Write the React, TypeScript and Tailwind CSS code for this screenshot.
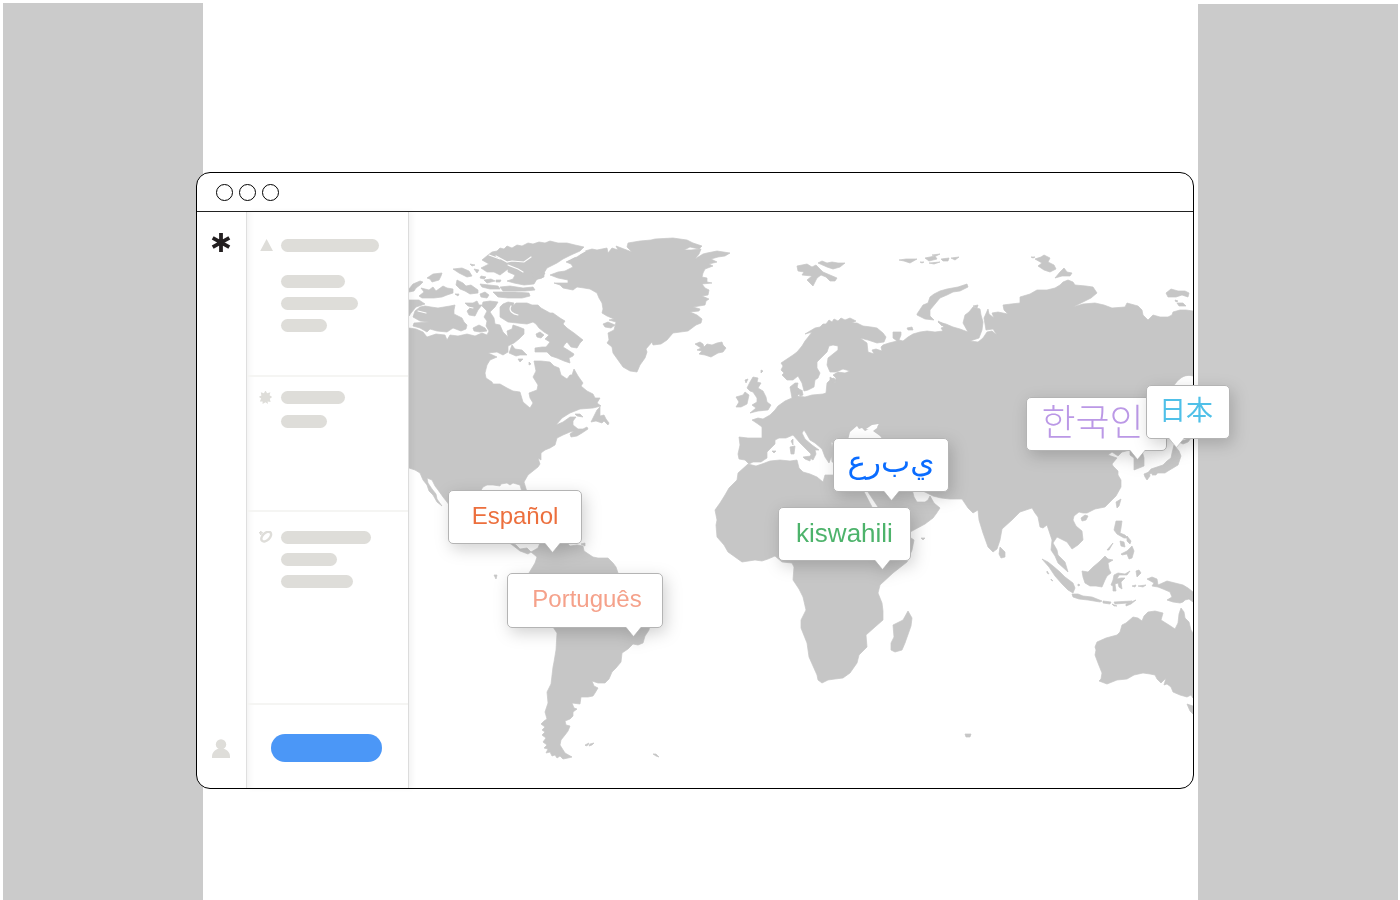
import React from 'react';

const MAP = { x: 409, y: 212, width: 784, height: 576 };

// Closed outlines, all in the coordinate space of MAP
const LAND = [
  // North America
  'M409 328L416 329 423 332 427 337 436 334 445 335 447 340 450 335 458 336 467 334 475 336 482 333 487 335 489 331 486 326 487 321 484 317 487 311 482 306 483 302 490 301 498 302 495 307 490 312 494 318 495 324 500 325 503 332 508 337 507 331 512 329 513 325 519 327 524 329 524 334 519 339 514 343 508 346 508 352 503 355 497 352 488 353 497 357 490 360 487 365 485 373 486 378 492 382 493 384 500 384 507 388 513 391 520 392 523 402 530 408 533 403 530 398 529 393 537 390 538 385 533 377 536 371 534 361 541 361 550 362 554 366 559 368 561 375 567 379 570 375 572 375 574 369 578 376 583 383 581 386 587 391 593 394 595 398 600 398 597 403 601 406 593 408 580 409 570 413 562 418 556 425 563 422 570 417 576 417 573 421 573 425 578 429 583 429 587 427 588 429 582 433 577 436 571 437 570 434 574 431 570 432 563 435 557 438 555 445 550 448 545 450 541 453 541 460 538 458 540 464 538 467 533 471 528 475 524 482 527 492 522 492 520 485 513 483 510 485 507 483 501 484 500 486 493 485 487 485 483 487 480 492 478 515 500 520 512 543 516 545 520 549 527 548 531 552 528 554 520 551 511 544 480 530 460 520 447 502 443 497 438 490 435 486 432 480 427 478 428 483 432 489 436 494 437 499 442 506 437 502 433 495 429 491 427 485 423 480 420 473 415 470 409 468Z',
  // South America
  'M531 552L538 548 540 543 567 543 570 546 577 545 583 546 584 551 593 557 598 558 608 558 613 563 616 567 619 576 645 590 662 597 661 602 655 610 651 620 649 630 645 636 643 643 638 645 633 644 628 649 622 653 621 662 616 668 612 672 609 679 605 683 598 683 592 681 594 686 598 688 595 693 593 696 588 697 581 697 580 704 572 703 574 708 577 709 573 712 573 716 570 719 565 721 566 725 570 726 568 731 565 735 561 740 560 745 565 753 572 757 568 758 563 759 560 756 557 758 555 755 552 756 550 752 546 753 548 749 544 748 547 745 543 742 546 738 542 735 545 732 542 730 545 727 541 724 544 721 547 719 545 712 548 703 547 692 551 684 553 667 554 662 556 650 557 633 553 627 540 610 528 585 529 573 535 563 537 557Z',
  // Greenland
  'M550 275L558 272 565 271 573 267 571 264 566 262 572 258 577 257 585 251 592 249 597 250 607 248 608 253 612 248 618 250 616 246 632 252 627 247 628 243 640 241 651 240 655 239 673 238 687 240 693 243 702 246 699 249 690 247 684 250 691 250 701 249 699 254 695 259 703 254 707 253 717 251 730 253 725 256 718 257 711 259 717 262 709 264 713 266 705 269 703 273 702 277 707 278 707 282 712 283 702 284 705 288 709 290 708 295 702 296 709 299 706 301 705 305 693 307 700 309 699 311 690 312 697 315 702 319 701 323 696 325 688 331 673 333 667 340 661 344 653 345 652 342 646 349 647 352 645 358 640 365 637 372 630 371 623 367 613 353 612 347 607 343 609 340 608 333 614 330 616 322 609 320 614 319 607 316 602 313 603 309 602 303 599 298 597 293 590 289 584 288 577 287 573 290 563 288 560 285 554 283 568 283 568 280 558 278Z',
  'M603 324L608 322 615 325 611 328 605 327Z',
  // Ellesmere and Devon
  'M492 252L497 251 500 248 504 249 507 246 512 248 517 245 522 246 528 243 533 244 539 242 545 243 550 241 558 243 567 243 575 245 584 247 580 251 571 255 563 259 557 263 547 268 544 273 544 277 537 279 534 284 524 285 514 283 507 281 513 279 515 275 508 272 508 269 500 275 494 272 487 272 481 268 489 264 482 260 488 255Z',
  'M532 272L539 271 545 273 542 278 534 280Z',
  'M500 287L510 286 523 288 533 287 535 290 525 291 514 291 503 291Z',
  'M493 292L503 292 515 292 529 293 530 296 522 298 508 298 498 297Z',
  'M480 284L489 285 498 286 500 289 490 289 482 287Z',
  'M480 294L485 292 489 295 487 298 481 297Z',
  'M484 280L491 279 495 281 487 283Z M496 280L501 280 500 282 496 282Z M481 276L486 277 484 279 480 278Z',
  // Parry Islands
  'M409 289L413 284 420 281 423 282 420 285 416 288 414 291 409 292Z',
  'M427 278L433 274 442 273 441 276 439 280 432 282 430 279Z',
  'M419 296L424 292 421 288 429 290 433 287 436 291 443 286 447 288 453 289 453 293 447 295 442 297 434 298 430 298 422 298Z',
  'M453 269L462 268 469 271 472 276 467 277 459 273Z',
  'M457 280L463 283 466 286 471 285 478 290 478 293 470 294 465 291 460 289 456 285Z',
  'M470 264L475 265 472 266Z M474 269L479 270 477 273Z M455 294L459 294 458 296Z',
  // Banks and Victoria
  'M409 300L419 300 425 304 416 307 411 313 409 316Z',
  'M425 306L431 307 438 308 444 307 450 306 455 305 454 310 454 314 462 318 464 322 467 325 466 329 461 331 453 328 447 332 437 331 430 329 427 332 420 328 413 326 414 323 429 322 420 321 413 317 415 311 420 307Z',
  'M465 303L473 303 477 301 479 305 482 305 478 310 475 316 469 315 467 311 470 308Z',
  'M473 328L479 325 485 328 487 331 480 332 474 331Z',
  // Baffin
  'M500 307L503 304 508 302 514 303 513 306 516 303 527 303 532 305 538 305 541 308 550 313 553 313 560 318 565 321 563 324 567 328 574 333 583 340 580 343 577 348 571 347 567 342 565 344 563 347 568 350 574 354 573 356 569 358 570 363 564 361 557 358 551 356 547 352 541 352 535 352 535 348 542 347 546 347 550 342 545 339 549 335 544 332 539 328 536 324 533 322 527 324 517 323 508 322 500 317Z',
  'M536 334L540 332 544 335 541 338 537 337Z',
  'M512 345L515 349 522 350 527 355 520 355 516 356 509 353Z',
  'M518 359L523 359 520 362Z M529 362L531 364 529 365Z',
  // Newfoundland, Anticosti
  'M600 407L597 410 593 418 591 422 596 421 602 423 604 421 608 425 609 423 606 419 604 415 600 416Z',
  'M575 414L580 414 583 417 577 416Z',
  // Small Atlantic and Pacific islands
  'M585 745L589 743 588 745 586 746Z M590 744L594 743 592 745 589 746Z M653 754L656 754 659 757 656 756Z M494 575L497 575 496 579Z M581 544L585 543 585 546Z M965 734L971 734 970 737 966 737Z',
  // Iceland
  'M695 344L700 342 703 344 704 347 707 344 712 345 717 343 722 342 723 345 726 348 723 352 718 353 711 357 705 355 699 354 702 351 697 350 701 348Z',
  // British Isles
  'M750 382L753 377 758 378 757 382 761 383 758 388 763 391 766 397 767 402 771 405 768 410 758 411 750 413 756 408 752 405 757 402 757 398 753 392 750 391 747 388Z',
  'M736 397L743 395 745 392 749 395 747 404 741 407 736 407 739 402Z',
  'M761 370L763 371 761 373Z M745 380L748 379 746 383Z',
  // Europe, Asia and Arabia
  'M739 437L748 438 762 438 762 427 758 424 752 420 758 418 763 419 770 415 775 410 778 406 785 401 792 398 790 387 795 383 798 383 797 388 801 390 799 394 797 396 805 397 812 395 823 394 826 393 827 383 830 380 830 377 833 379 835 383 836 378 833 375 838 372 845 373 850 371 843 369 836 372 830 372 827 365 828 358 833 354 838 350 838 346 833 345 829 346 827 352 822 357 817 362 817 368 820 373 818 378 815 380 814 387 808 390 804 391 802 383 798 376 793 380 787 380 782 375 784 373 781 370 783 366 781 363 787 359 793 355 797 352 802 346 805 341 809 336 812 332 805 334 815 328 820 327 823 324 826 324 829 320 832 322 834 319 838 321 841 318 845 320 850 318 856 321 852 323 857 323 863 326 871 327 877 328 883 333 886 337 884 342 877 343 868 340 860 338 867 343 868 352 874 354 872 350 876 349 882 351 881 347 883 345 889 343 893 342 897 341 893 338 893 332 901 332 901 335 899 340 903 341 908 337 913 334 920 332 927 331 935 332 943 331 941 328 944 327 938 322 946 324 953 327 960 329 968 332 963 323 965 315 969 312 973 307 980 309 981 315 983 322 982 330 979 338 970 341 978 342 983 338 987 332 992 331 997 335 993 329 986 330 985 324 984 318 988 309 989 314 994 318 992 313 998 312 1008 314 1004 310 1003 305 1011 304 1020 303 1020 297 1030 294 1037 290 1047 290 1055 288 1060 285 1063 282 1068 280 1073 282 1075 285 1086 286 1093 287 1097 293 1091 298 1083 302 1073 307 1083 304 1095 303 1104 305 1112 308 1125 307 1127 303 1138 306 1142 310 1143 315 1148 320 1153 315 1160 317 1168 317 1172 315 1173 312 1180 310 1186 310 1193 311 1193 376C1186 374 1180 377 1175 384L1171 390 1160 410 1147 440 1147 448 1142 451 1144 458 1144 466 1134 470 1134 458 1130 455 1130 450 1122 452 1118 456 1112 452 1108 455 1117 458 1112 464 1113 466 1118 471 1118 475 1121 480 1121 487 1116 496 1112 500 1105 507 1095 509 1087 513 1083 513 1079 512 1074 516 1073 520 1076 526 1082 531 1083 540 1078 545 1072 549 1067 542 1061 539 1057 537 1053 543 1057 550 1058 555 1065 562 1068 572 1058 563 1055 556 1051 550 1052 540 1050 534 1047 525 1043 528 1040 527 1038 517 1035 513 1032 508 1026 510 1020 512 1012 520 1002 529 1000 540 997 549 993 552 988 547 983 533 979 520 978 510 973 513 968 508 962 499 950 499 941 498 933 496 925 492 915 488 912 489 914 497 917 502 925 502 928 500 930 496 934 503 940 508 936 514 933 518 925 524 912 531 895 540 878 507 868 492 860 478 855 470 840 464 832 462 831 450 833 443 831 442 833 452 829 463 825 457 822 449 815 443 810 440 806 433 804 430 802 433 805 439 812 445 819 450 815 450 816 454 813 460 810 458 811 454 807 450 800 443 793 435 786 438 779 438 775 440 775 444 767 452 767 458 761 462 753 462 749 464 745 460 739 459 738 454 740 445Z',
  'M793 398L794 385 799 389 796 398Z M798 392L802 390 803 395 800 396Z M831 379L834 378 836 381 832 383Z',
  // Mediterranean islands
  'M803 457L811 456 810 461 805 459Z M790 447L795 446 794 454 791 454Z M791 441L793 439 793 445Z M772 451L776 451 774 453Z',
  // Africa
  'M748 464L756 466 762 464 770 461 780 460 790 461 797 460 799 468 803 472 810 474 817 477 823 482 825 475 833 475 850 480 862 488 872 507 885 540 900 541 911 538 914 540 912 550 907 562 893 573 880 585 878 593 882 603 883 611 883 620 875 627 866 635 867 647 859 655 857 663 850 673 843 678 835 679 828 680 822 683 818 680 817 675 809 657 807 643 801 628 801 620 806 610 803 597 799 589 793 580 794 567 792 563 782 562 775 556 768 559 762 561 755 560 742 562 735 557 728 552 724 545 717 537 716 525 717 520 715 510 720 503 725 495 729 488 737 480 738 473Z',
  'M908 611L912 618 911 626 905 643 902 650 895 652 891 650 891 643 894 637 893 625 903 620Z',
  'M921 538L925 538 923 540Z',
  // Arctic islands
  'M917 314L923 305 928 303 930 297 934 294 940 291 947 289 958 287 967 284 968 287 960 291 953 292 947 295 940 298 935 304 930 310 930 316 934 320 925 319 917 315Z',
  'M797 266L807 264 812 267 816 265 823 272 830 275 837 278 835 281 830 281 826 277 821 275 817 278 813 286 807 280 812 276 802 275 804 272 798 271Z',
  'M818 263L822 261 827 263 832 262 838 263 845 263 840 267 833 269 827 267Z',
  'M899 260L906 259 917 259 910 263 904 261Z M925 258L935 256 937 259 929 261Z M941 259L949 258 948 261 943 261Z M929 263L940 262 934 264Z M951 258L959 257 955 260Z M932 255L940 254 936 256Z M920 262L924 262 922 263Z M907 328L912 327 913 330 908 330Z',
  'M1035 259L1041 257 1044 255 1050 258 1048 262 1054 265 1056 269 1050 272 1044 270 1038 266 1042 263Z M1031 257L1035 257 1033 258Z M1055 278L1060 272 1064 268 1067 272 1072 273 1070 276 1062 276Z',
  'M1166 293L1171 289 1178 291 1185 291 1189 293 1188 297 1182 295 1176 297 1168 297Z M1177 303L1183 303 1186 306 1179 306Z M1175 300L1178 301 1176 302Z M973 306L978 305 977 308Z M938 321L944 324 942 326Z',
  // Japan, Taiwan, Hainan
  'M1174 445L1179 451 1181 456 1178 465 1173 468 1168 471 1165 473 1157 473 1147 474 1151 469 1157 467 1163 465 1167 461 1171 458 1172 453Z M1144 474L1149 472 1150 476 1147 480 1145 477Z M1153 473L1158 472 1156 475 1152 475Z M1179 442L1191 438 1188 442 1183 444Z',
  'M1116 502L1121 499 1119 506 1117 508Z M1081 518L1085 515 1088 516 1086 520 1082 521Z',
  // South-east Asia
  'M1000 547L1005 552 1005 557 1001 558 999 554Z',
  'M1042 559L1048 562 1053 566 1060 572 1065 577 1073 583 1075 588 1073 593 1068 590 1062 584 1055 576 1049 567Z M1047 571L1049 574 1047 573Z M1051 579L1053 581 1051 580Z M1078 584L1080 585 1078 586Z',
  'M1072 594L1078 594 1083 596 1092 597 1102 601 1100 602 1088 600 1079 599 1073 597Z M1103 601L1111 602 1110 604 1103 603Z M1114 602L1132 601 1128 603 1115 604Z M1126 604L1136 600 1131 604 1126 606Z M1112 604L1117 606 1114 606Z',
  'M1082 571L1088 572 1093 567 1099 562 1105 556 1108 559 1113 560 1108 563 1109 569 1111 573 1107 576 1105 580 1102 587 1096 586 1090 586 1085 583 1083 577Z',
  'M1114 575L1118 573 1125 574 1130 571 1127 575 1119 575 1117 579 1121 578 1125 578 1121 582 1122 589 1119 587 1118 583 1115 584 1116 591 1113 591 1113 586 1111 585 1113 580Z',
  'M1116 521L1122 521 1121 528 1120 533 1125 535 1128 538 1124 538 1117 534 1114 530Z M1120 541L1124 542 1125 547 1121 546Z M1127 536L1131 541 1130 544 1127 541Z M1121 554L1127 551 1132 546 1134 551 1132 558 1129 559 1127 554 1122 555Z M1107 550L1113 543 1109 550Z',
  'M1136 571L1139 570 1141 573 1137 577Z M1132 586L1136 585 1135 587Z M1138 586L1146 585 1143 587Z',
  'M1147 579L1152 577 1157 579 1158 585 1167 581 1175 583 1183 585 1188 588 1193 592 1193 602 1189 599 1185 600 1183 602 1180 603 1173 602 1167 600 1172 597 1170 592 1163 589 1158 587 1152 586 1154 583Z',
  // Australia
  'M1097 642L1106 638 1117 635 1120 632 1122 625 1126 623 1133 617 1138 618 1142 621 1144 616 1148 612 1155 611 1163 613 1161 620 1169 625 1175 629 1178 623 1179 614 1181 608 1184 612 1185 618 1189 622 1191 630 1193 633 1193 698 1191 695 1187 697 1180 695 1173 692 1171 687 1167 684 1164 685 1166 678 1161 683 1157 679 1155 675 1150 674 1143 673 1134 675 1127 679 1117 680 1112 682 1107 684 1099 681 1101 679 1102 673 1098 663 1095 655 1096 650 1095 647Z',
  'M1187 704L1193 706 1193 714 1190 711Z',
];

// Water that lies inside the land outlines
const WATER = [
  'M848 440L850 432 857 426 859 429 862 428 865 431 871 428 878 424 877 428 873 431 880 436 883 440Z',
  'M866 429L872 425 879 424 875 428 870 430Z',
];

const STRAITS = [
  'M511 306C508 311 513 314 518 315',
  'M496 256L507 262 512 261 524 262 531 257',
  'M508 265L518 269 523 272',
  'M489 255L500 259',
  'M585 251L570 259 556 265',
  'M418 311L426 313',
  'M468 307L473 308',
];

type Bubble = {
  text: string;
  lang: string;
  x: number;
  y: number;
  size: string;
  pointer: string;
  type: string;
};

const BUBBLES: Bubble[] = [
  { text: 'Español', lang: 'es', x: 448, y: 490, size: 'w-[134px] h-[54px]', pointer: 'left-[96px]', type: "text-[#ec6f3d] text-2xl font-['Liberation_Sans',sans-serif]" },
  { text: 'Português', lang: 'pt', x: 507, y: 573, size: 'w-[156px] h-[55px]', pointer: 'left-[118px]', type: "text-[#f5a18a] text-2xl pl-1 font-['Liberation_Sans',sans-serif]" },
  { text: 'ع\u200Cر\u200Cب\u200Cي', lang: 'ar', x: 833, y: 438, size: 'w-[116px] h-[54px]', pointer: 'left-[50px]', type: "text-[#0a6cff] text-[31px] pb-1 font-['DejaVu_Sans',sans-serif]" },
  { text: 'kiswahili', lang: 'sw', x: 778, y: 507, size: 'w-[133px] h-[54px]', pointer: 'left-[96px]', type: "text-[#4db36b] text-[26px] font-['Liberation_Sans',sans-serif]" },
  { text: '한국인', lang: 'ko', x: 1026, y: 397, size: 'w-[141px] h-[54px]', pointer: 'left-[103px]', type: "text-[#bb98e6] text-[37px] font-light pr-2 pb-1 font-['Noto_Sans_CJK_KR',sans-serif]" },
  { text: '日本', lang: 'ja', x: 1146, y: 385, size: 'w-[84px] h-[54px]', pointer: 'left-[22px]', type: "text-[#4fc0e8] text-[27px] pr-1 pb-1 font-['Noto_Sans_CJK_JP',sans-serif]" },
];

const SpeechBubble = ({ bubble }: { bubble: Bubble }) => (
  <div
    className={`absolute flex items-center justify-center rounded-[5px] border border-[#b4b4b4] bg-white pb-[3px] drop-shadow-[3px_5px_8px_rgba(0,0,0,0.18)] ${bubble.size}`}
    style={{
      left: `${((bubble.x - MAP.x) / MAP.width) * 100}%`,
      top: `${((bubble.y - MAP.y) / MAP.height) * 100}%`,
    }}
  >
    <bdo dir="ltr" lang={bubble.lang} className={`whitespace-nowrap leading-none ${bubble.type}`}>
      {bubble.text}
    </bdo>
    <svg className={`absolute top-full -mt-px ${bubble.pointer}`} width="15" height="11" viewBox="0 0 15 11" aria-hidden="true">
      <path d="M0 0H15V1L7.5 10.5L0 1Z" fill="#fff" />
      <path d="M0 1.5L7.5 10.5L15 1.5" fill="none" stroke="#b4b4b4" strokeWidth="0.6" />
    </svg>
  </div>
);

const WorldMap = () => (
  <div className="relative min-w-0 flex-1">
    <svg
      className="block w-full"
      viewBox={`${MAP.x} ${MAP.y} ${MAP.width} ${MAP.height}`}
      role="img"
      aria-label="World map"
    >
      <g fill="#c6c6c6" stroke="#c6c6c6" strokeWidth="0.7" strokeLinejoin="round">
        {LAND.map((d) => (
          <path key={d} d={d} />
        ))}
      </g>
      <g fill="#fff">
        {WATER.map((d) => (
          <path key={d} d={d} />
        ))}
      </g>
      <g fill="none" stroke="#fff" strokeWidth="1.2" strokeLinecap="round">
        {STRAITS.map((d) => (
          <path key={d} d={d} />
        ))}
      </g>
    </svg>
    {BUBBLES.map((bubble) => (
      <SpeechBubble key={bubble.lang} bubble={bubble} />
    ))}
  </div>
);

const Bar = ({ width }: { width: string }) => <div className={`h-[13px] rounded-full bg-[#deddd9] ${width}`} />;

const TriangleIcon = () => (
  <svg width="14" height="14" viewBox="0 0 14 14" fill="#deddd9" aria-hidden="true">
    <path d="M6.6 0L13 12H0.2Z" />
  </svg>
);

const BurstIcon = () => (
  <svg width="14" height="14" viewBox="0 0 14 14" fill="#deddd9" aria-hidden="true">
    <path d="M6.5 -0.6L8.1 2.2 11.4 1.2 10.6 4.2 13.2 6 10.8 7.8 11.6 11 8.6 10.4 9 13 6.5 11.2 3.6 13 3.6 10.4 0.8 10.6 2.2 7.6 -0.2 5.8 2.4 4.4 1.8 1.2 4.9 2.2Z" />
  </svg>
);

const RingIcon = () => (
  <svg width="14" height="14" viewBox="0 0 14 14" fill="none" stroke="#deddd9" aria-hidden="true">
    <ellipse cx="7.2" cy="5.6" rx="5.9" ry="3.6" strokeWidth="2.4" transform="rotate(-45 7.2 5.6)" />
    <path d="M1.8 0V4M0 1.8H3.8" strokeWidth="1.6" />
  </svg>
);

const Panel = () => (
  <div className="relative z-10 flex w-[162px] shrink-0 flex-col border-r border-[#dcdcdc] bg-white shadow-[3px_0_6px_rgba(0,0,0,0.05),inset_6px_0_6px_-4px_rgba(0,0,0,0.06)]">
    <section className="flex h-[165px] gap-[7px] border-b-2 border-[#f5f5f3] pt-[27px] pl-[13px]">
      <TriangleIcon />
      <div className="flex flex-col gap-[9px]">
        <Bar width="w-[98px] mb-[14px]" />
        <Bar width="w-16" />
        <Bar width="w-[77px]" />
        <Bar width="w-[46px]" />
      </div>
    </section>
    <section className="flex h-[135px] gap-2 border-b-2 border-[#f5f5f3] pt-[14px] pl-3">
      <BurstIcon />
      <div className="flex flex-col gap-[11px]">
        <Bar width="w-16" />
        <Bar width="w-[46px]" />
      </div>
    </section>
    <section className="flex h-[193px] gap-2 border-b-2 border-[#f5f5f3] pt-[19px] pl-3">
      <RingIcon />
      <div className="flex flex-col gap-[9px]">
        <Bar width="w-[90px]" />
        <Bar width="w-14" />
        <Bar width="w-[72px]" />
      </div>
    </section>
    <div className="pt-[29px] pl-6">
      <button type="button" aria-label="Continue" className="block h-[28px] w-[111px] rounded-full bg-[#4b97f7]" />
    </div>
  </div>
);

const Rail = () => (
  <div className="flex w-[50px] shrink-0 flex-col items-center justify-between rounded-bl-xl border-r border-[#e0e0e0] pt-5 pr-px pb-[30px]">
    <svg width="20" height="21" viewBox="0 0 20 21" fill="none" stroke="#231f20" strokeWidth="3.8" aria-hidden="true">
      <path d="M10 1V20M1.7 5.8L18.3 15.2M18.3 5.8L1.7 15.2" />
    </svg>
    <svg width="18" height="19" viewBox="0 0 18 19" fill="#deddd9" aria-hidden="true">
      <circle cx="9" cy="5.4" r="5.2" />
      <path d="M0 19V17.5C0 13 4 9.5 9 9.5S18 13 18 17.5V19Z" />
    </svg>
  </div>
);

const BrowserWindow = () => (
  <div className="relative -ml-[7px] mr-1 rounded-[14px] border border-black bg-white">
    <div className="flex h-[39px] items-center gap-[6px] border-b border-[#222] pl-[19px]">
      <span className="size-[17px] rounded-full border border-black" />
      <span className="size-[17px] rounded-full border border-black" />
      <span className="size-[17px] rounded-full border border-black" />
    </div>
    <div className="flex">
      <Rail />
      <Panel />
      <WorldMap />
    </div>
  </div>
);

export default function App() {
  return (
    <main className="flex min-h-screen bg-white pr-[2px] pl-[3px]">
      <div className="mt-[3px] w-[200px] shrink-0 bg-[#cbcbcb]" />
      <div className="min-w-0 flex-1 pt-[172px]">
        <BrowserWindow />
      </div>
      <div className="mt-1 w-[200px] shrink-0 bg-[#cbcbcb]" />
    </main>
  );
}
